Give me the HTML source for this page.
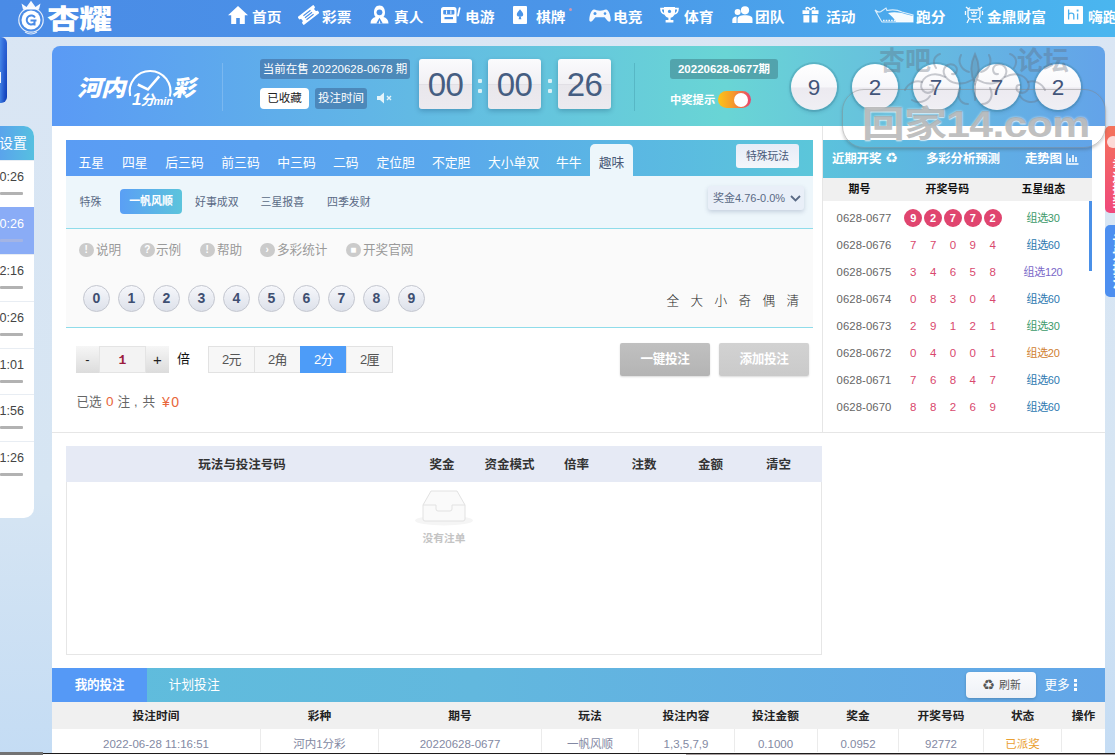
<!DOCTYPE html>
<html lang="zh-CN">
<head>
<meta charset="utf-8">
<title>河内1分彩</title>
<style>
*{box-sizing:border-box;margin:0;padding:0}
html,body{width:1115px;height:755px;overflow:hidden}
body{position:relative;background:linear-gradient(180deg,#dae6f4 0%,#d6e5f3 65%,#c4dcf4 100%);font-family:"Liberation Sans","Noto Sans CJK SC",sans-serif;font-size:12px;color:#333;line-height:1}
.abs{position:absolute}
/* NAV */
#nav{position:absolute;left:0;top:0;width:1115px;height:37px;background:linear-gradient(90deg,#4a8be6 0%,#4b95e8 50%,#4ab6ef 100%)}
#nav .it{position:absolute;top:8.6px;height:18px;line-height:18px;font-size:13.4px;font-weight:bold;color:#fff;white-space:nowrap;transform:scaleX(1.1);transform-origin:left;margin-left:-1.2px}
#nav svg{position:absolute}
#logo{position:absolute;left:46.5px;top:3.5px;font-size:27.5px;line-height:32px;font-weight:900;color:#fff;letter-spacing:-0.5px;transform:scaleX(1.19);transform-origin:left;white-space:nowrap}
/* SIDEBAR */
#sbbox{position:absolute;left:0;top:37px;width:6.7px;height:65.6px;border-radius:0 6px 6px 0;background:linear-gradient(90deg,rgba(80,150,240,.75) 0%,rgba(60,120,230,.35) 60%,rgba(0,0,0,0) 100%),linear-gradient(180deg,#2c62d4,#0c3ab4)}
#side{position:absolute;left:0;top:126px;width:34px;height:392px;background:#fff;border-radius:0 10px 10px 0;overflow:hidden}
#side .hd{position:absolute;left:0;top:0;width:34px;height:34px;background:linear-gradient(90deg,#5aa4ec,#56c0e0);color:#fff;font-size:14px;line-height:35px;white-space:nowrap}
#side .hd span{position:absolute;right:7px;top:0}
#side .r{position:absolute;left:0;width:34px;height:47px;border-top:1px solid #e8edf3;color:#444;font-size:12.6px}
#side .r span{position:absolute;right:10px;top:9px;line-height:14px;white-space:nowrap}
#side .r i{position:absolute;left:0;top:31px;width:23px;height:2.5px;background:#b2b2b2;border-radius:1px}
#side .r.on{background:#8aacf6;color:#fff;border-top-color:#8aacf6}
#side .r.on i{background:#a3b4e4}
/* HEADER PANEL */
#hp{position:absolute;left:52px;top:46px;width:1053px;height:80px;border-radius:8px 8px 0 0;background:linear-gradient(90deg,#5a9af5 0%,#69d5d5 64%,#63a3e9 100%)}
#main{position:absolute;left:52px;top:126px;width:1053px;height:629px;background:#fff}

/* header panel contents */
#hp .logo{position:absolute;left:24.5px;top:30px;font-size:22.5px;line-height:26px;transform:scaleX(1.1);transform-origin:left;font-weight:900;font-style:italic;color:#fff;white-space:nowrap;letter-spacing:-1px}
#hp .logo2{position:absolute;left:119.5px;top:30px;font-size:22.5px;line-height:26px;transform:scaleX(1.03);transform-origin:left;font-weight:900;font-style:italic;color:#fff}
#hp .min{position:absolute;left:80px;top:43.5px;font-size:14px;line-height:20px;font-weight:bold;font-style:italic;color:#fff;white-space:nowrap;letter-spacing:-1px}
#hp .vline{position:absolute;top:17px;width:1px;height:48px;background:rgba(255,255,255,.18)}
.badge{position:absolute;height:20px;line-height:20px;border-radius:3px;color:#fff;font-size:11.5px;text-align:center;white-space:nowrap}
.fbox{position:absolute;top:13px;width:53px;height:50px;border-radius:3px;background:linear-gradient(180deg,#fbfbfd 0%,#f1f0f4 49%,#d9d7de 50%,#e9e7ec 52%,#eceaef 100%);box-shadow:0 2px 5px rgba(0,40,80,.25);color:#465e82;font-size:33px;line-height:52px;text-align:center;letter-spacing:-0.5px}
.cdot{position:absolute;width:4px;height:4px;background:#d9f1f6;border-radius:1px}
.ball{position:absolute;top:17.7px;width:46px;height:46px;margin-left:-1px;border-radius:50%;background:linear-gradient(180deg,#ffffff 0%,#f7f7fa 50%,#eceaf0 52%,#f0eff4 100%);box-shadow:0 0 0 2px rgba(60,130,150,.26),0 2px 4px rgba(0,40,80,.2);color:#42557a;font-size:22.5px;line-height:48px;text-align:center}
/* game tabs */
#tabs{position:absolute;left:14px;top:14px;width:747px;height:36px;background:linear-gradient(90deg,#5a9cf4 0%,#5aa8ec 50%,#5bc6da 100%)}
#tabs .t{position:absolute;top:0;height:36px;line-height:46px;font-size:12.8px;color:#fff;white-space:nowrap}
#tabs .sel{position:absolute;left:524px;top:4px;width:43px;height:32px;border-radius:5px 5px 0 0;background:#edf6fb;color:#4a5a78;font-size:12.8px;line-height:38px;text-align:center}
#tabs .sp{position:absolute;left:670px;top:4px;width:63px;height:24px;border-radius:3px;background:linear-gradient(180deg,#e6ecf7,#f3f6fb);color:#4a5a78;font-size:10.8px;line-height:24px;text-align:center}
#sub{position:absolute;left:14px;top:50px;width:747px;height:53px;background:#edf6fb;border-bottom:1px solid #8fdcea}
#sub .s{position:absolute;top:19px;font-size:10.9px;line-height:14px;color:#5a6a85;white-space:nowrap}
#sub .on{position:absolute;left:54px;top:13px;width:62px;height:25px;border-radius:4px;background:linear-gradient(90deg,#5a9ff5,#5cc4dc);color:#fff;font-weight:bold;font-size:10.9px;line-height:25px;text-align:center}
#sub .selbox{position:absolute;left:642px;top:10px;width:96px;height:24px;border-radius:3px;background:#e9eff8;box-shadow:0 2px 4px rgba(80,100,140,.25);color:#5a6a85;font-size:11px;line-height:24px;padding-left:5px;white-space:nowrap}
#area{position:absolute;left:14px;top:103px;width:747px;height:99px;background:#fafafa;border-bottom:1px solid #8fdcea}
#area .h{position:absolute;top:14px;height:14px;line-height:14px;font-size:12.6px;color:#9a9a9a;white-space:nowrap}
#area .ic{position:absolute;top:13.5px;width:14.5px;height:14.5px;border-radius:50%;background:#cbcbcb;color:#fff;font-size:10px;font-weight:bold;line-height:14px;text-align:center}
#area .n{position:absolute;top:56px;width:27px;height:27px;border-radius:50%;border:1px solid #c3c6cf;background:linear-gradient(180deg,#f6f7fb,#dde1ea);color:#3f4f72;font-size:14px;font-weight:bold;line-height:25px;text-align:center}
#area .q{position:absolute;top:65px;font-size:12.6px;line-height:14px;color:#222;font-weight:300}

/* bet row */
.mb{position:absolute;top:220px;height:27px;font-size:13px;line-height:27px;text-align:center;color:#222}
.unit{position:absolute;top:220px;height:27px;width:47px;border:1px solid #e2e2e2;background:#f7f7f7;color:#555;font-size:13px;line-height:25px;text-align:center;letter-spacing:-0.5px}
.gbtn{position:absolute;top:217px;width:90px;height:33px;border-radius:2px;color:#fff;font-size:12.6px;font-weight:bold;line-height:33px;text-align:center;letter-spacing:-0.3px;box-shadow:0 1px 2px rgba(0,0,0,.15)}
/* right panel */
#rp{position:absolute;left:771px;top:14px;width:269px;height:292px;overflow:hidden}
#rp .hd{position:absolute;left:0;top:0;width:269px;height:38px;background:linear-gradient(90deg,#5bc2dc 0%,#5fb0e4 55%,#62a4e8 100%)}
#rp .hd b{position:absolute;top:11px;line-height:16px;font-size:12.5px;color:#fff;white-space:nowrap;letter-spacing:-0.2px}
#rp .sh{position:absolute;left:0;top:38px;width:269px;height:23px;background:#f0f0f0}
#rp .sh b{position:absolute;top:4px;line-height:14px;font-size:10.9px;color:#111;white-space:nowrap}
#rp .row{position:absolute;left:0;width:269px;height:27px;font-size:11px;line-height:27px}
#rp .row .is{position:absolute;left:13.5px;top:0;color:#666;font-size:11.3px;letter-spacing:.1px}
#rp .row .d{position:absolute;top:0;width:20px;text-align:center;color:#d9486e;font-size:11.5px}
#rp .row .c{position:absolute;top:4.5px;width:18px;height:18px;border-radius:50%;background:#e0456f;color:#fff;font-weight:bold;font-size:11px;line-height:18px;text-align:center}
#rp .row .z{position:absolute;left:175px;width:90px;text-align:center;top:0;font-size:11px;letter-spacing:-0.3px}
/* bet list */
#bl{position:absolute;left:14px;top:320px;width:756px;height:209px;border:1px solid #e6e6e6;border-top:none}
#bl .hd{position:absolute;left:-1px;top:0;width:756px;height:36px;background:#e6eaf5}
#bl .hd b{position:absolute;top:11px;width:100px;margin-left:-50px;text-align:center;font-size:12.5px;line-height:16px;color:#333;white-space:nowrap}
/* bottom */
#bb{position:absolute;left:0;top:542px;width:1053px;height:34px;background:linear-gradient(90deg,#5fbddc 0%,#62b8de 40%,#63a6e8 100%)}
#bb .my{position:absolute;left:0;top:0;width:95px;height:34px;background:#5599f6;color:#fff;font-weight:bold;font-size:12.6px;line-height:34px;text-align:center;letter-spacing:-0.2px}
#bt{position:absolute;left:0;top:576px;width:1053px;height:27px;background:#f0f0f0}
#bt b{position:absolute;top:6px;width:100px;margin-left:-50px;text-align:center;font-size:11.7px;line-height:15px;color:#222;white-space:nowrap}
#br{position:absolute;left:0;top:603px;width:1053px;height:23px;background:#fff}
#br span{position:absolute;top:8px;width:160px;margin-left:-80px;text-align:center;font-size:11.5px;line-height:14px;color:#8389a3;white-space:nowrap}
#br i{position:absolute;top:0;width:1px;height:23px;background:#ebebeb}
</style>
</head>
<body>
<div id="nav">

  <svg style="left:17px;top:0" width="30" height="36" viewBox="0 0 30 36"><g fill="none" stroke="#fff"><circle cx="14" cy="20" r="12.2" stroke-width="1.2" opacity=".85"/><circle cx="14" cy="20" r="9.5" fill="#fff" stroke="none"/><path d="M18 17.5 a4.5 4.5 0 1 0 -1 6 M13.5 20.5 H19.5 M17.5 20.5 V25.5" stroke="#4a8be6" stroke-width="2" /><path d="M6 9.5 L4.5 3.5 L9.5 7 L14 0.8 L18.5 7 L23.5 3.5 L22 9.5 Z" fill="#fff" stroke="none" opacity=".95"/><path d="M8 32 Q14 36 20 32" stroke-width="1.2" opacity=".8"/></g></svg>
  <svg style="left:228px;top:6px" width="20" height="18" viewBox="0 0 20 18"><path d="M10 0 L20 9.2 H16.8 V18 H11.8 V12 H8.2 V18 H3.2 V9.2 H0 Z" fill="#fff"/></svg>
  <svg style="left:298px;top:5px" width="21" height="20" viewBox="0 0 21 20"><g transform="rotate(-38 10.5 10)"><path d="M0.5 5 H20.5 V8 a2 2 0 0 0 0 4 V15 H0.5 V12 a2 2 0 0 0 0 -4 Z" fill="#fff"/><path d="M6 7.5 H15 M6 10 H15 M6 12.5 H15" stroke="#4a8fe7" stroke-width="1.1"/></g></svg>
  <svg style="left:370px;top:5px" width="19" height="19" viewBox="0 0 19 19"><path d="M9.5 0.5 C13.5 0.5 15 4 15 7.5 C15 9.5 14.3 11 13.4 12 C16.5 12.8 18.5 14.8 18.5 18.5 H0.5 C0.5 14.8 2.5 12.8 5.6 12 C4.7 11 4 9.5 4 7.5 C4 4 5.5 0.5 9.5 0.5 Z" fill="#fff"/><circle cx="9.5" cy="7.3" r="2.9" fill="#4a90e7"/><path d="M6.2 18.5 L9.5 12.8 L12.8 18.5 Z" fill="#4a90e7"/><path d="M8.6 18.5 L9.5 15 L10.4 18.5Z" fill="#fff"/></svg>
  <svg style="left:441px;top:7px" width="20" height="16" viewBox="0 0 20 16"><path d="M2.5 0 H13 a2.5 2.5 0 0 1 2.5 2.5 V16 H0 V2.5 A2.5 2.5 0 0 1 2.5 0 Z" fill="#fff"/><rect x="2.2" y="3" width="11.2" height="4.4" rx="1" fill="#4a92e8"/><path d="M5.6 3.4 V7 M9.9 3.4 V7" stroke="#fff" stroke-width="1"/><rect x="3.5" y="10" width="8.5" height="2.2" fill="#4a92e8"/><path d="M17 8.5 L18.6 1.2" stroke="#fff" stroke-width="1.8" stroke-linecap="round"/></svg>
  <svg style="left:513px;top:6px" width="14" height="18" viewBox="0 0 14 18"><rect x="0" y="0" width="14" height="18" rx="1" fill="#fff"/><path d="M7 3.2 C8.6 5.2 10.2 6.6 10.2 8.6 C10.2 10.2 8.8 11 7.6 10.2 L8.4 13.2 H5.6 L6.4 10.2 C5.2 11 3.8 10.2 3.8 8.6 C3.8 6.6 5.4 5.2 7 3.2 Z" fill="#4a94e8"/></svg>
  <div class="abs" style="left:569px;top:8px;width:3px;height:3px;border-radius:50%;background:rgba(240,150,160,.8)"></div>
  <svg style="left:589px;top:9px" width="22" height="13" viewBox="0 0 22 13"><path d="M5 0.5 C7 0.5 8 1.8 11 1.8 C14 1.8 15 0.5 17 0.5 C19.5 0.5 21.5 6 21.7 10.5 C21.8 13 19.5 13.2 18.3 11.6 L15.6 8.2 H6.4 L3.7 11.6 C2.5 13.2 0.2 13 0.3 10.5 C0.5 6 2.5 0.5 5 0.5 Z" fill="#fff" opacity=".95"/><circle cx="6" cy="4.6" r="1.5" fill="#4a96e8"/><circle cx="16" cy="4.6" r="1.3" fill="#4a96e8"/></svg>
  <svg style="left:660px;top:7px" width="19" height="16" viewBox="0 0 19 16"><path d="M4 0 H15 V5 C15 8.4 12.6 10.4 10.6 10.8 V13 H13.4 V15.6 H5.6 V13 H8.4 V10.8 C6.4 10.4 4 8.4 4 5 Z" fill="#fff"/><path d="M4 1.6 H1 C1 5 2.4 6.6 4.8 7 M15 1.6 H18 C18 5 16.6 6.6 14.2 7" fill="none" stroke="#fff" stroke-width="1.6"/><circle cx="9.5" cy="4.4" r="1.6" fill="#4a9ae9"/></svg>
  <svg style="left:732px;top:6px" width="21" height="17" viewBox="0 0 21 17"><circle cx="13" cy="4.3" r="4.1" fill="#fff"/><path d="M5.5 17 V13 C5.5 10.4 8 9.2 13 9.2 C18 9.2 20.5 10.4 20.5 13 V17 Z" fill="#fff"/><circle cx="5.6" cy="6" r="3" fill="#fff"/><path d="M0.3 17 V13.8 C0.3 11.6 2 10.6 4.6 10.4 V17 Z" fill="#fff"/></svg>
  <svg style="left:802px;top:6px" width="17" height="17" viewBox="0 0 17 17"><path d="M0.5 4.2 H7.3 V8 H0.5 Z M9.7 4.2 H16.5 V8 H9.7 Z M1.4 9.2 H7.3 V16.4 H1.4 Z M9.7 9.2 H15.6 V16.4 H9.7 Z" fill="#fff"/><path d="M8.5 4 C6 0 2.8 1.2 4.6 3.6 M8.5 4 C11 0 14.2 1.2 12.4 3.6" fill="none" stroke="#fff" stroke-width="1.5"/></svg>
  <svg style="left:874px;top:7px" width="40" height="16" viewBox="0 0 40 16"><path d="M1 3 C3 5 5 5.5 7 4.5 L12 1 L13 3.5 C18 2.5 24 3 28 5 L39 8 V15 H8 C6 12 5 10 1 3 Z" fill="none" stroke="#fff" stroke-width="1.1" opacity=".8"/><path d="M14 6 C20 4.5 27 5.5 31 7 L39 9 V15 H22 C20 11 17 8.5 14 6 Z" fill="#fff" opacity=".95"/><path d="M9 13.5 H21" stroke="#fff" stroke-width="1.6" stroke-dasharray="1.6 1.1" opacity=".9"/></svg>
  <svg style="left:964px;top:6px" width="20" height="18" viewBox="0 0 20 18"><g fill="none" stroke="#fff" stroke-width="1.3" opacity=".95"><path d="M2 1 C4 3 5 3 6 1.5 M18 1 C16 3 15 3 14 1.5"/><path d="M4 4 H16 V10 C16 12.5 13.5 13.5 10 13.5 C6.5 13.5 4 12.5 4 10 Z"/><path d="M7 6 C8 8 9 8 10 6 C11 8 12 8 13 6 M7.5 10 H12.5"/><path d="M5 13 L3 17 M15 13 L17 17 M10 13.5 V17"/><path d="M1.5 5 V9 M18.5 5 V9"/></g></svg>
  <svg style="left:1064px;top:6px" width="19" height="18" viewBox="0 0 19 18"><rect width="19" height="18" rx="1" fill="#fff"/><path d="M4.6 3.6 V13.6 M4.6 9.2 C4.6 6.4 9.8 6.4 9.8 9.2 V13.6 M13.6 7.4 V13.6" fill="none" stroke="#4ab0ee" stroke-width="1.3"/><rect x="12.7" y="3.6" width="1.8" height="1.9" fill="#4ab0ee"/></svg>
  <div id="logo">杏耀</div>
  <div class="it" style="left:253px">首页</div>
  <div class="it" style="left:323px">彩票</div>
  <div class="it" style="left:395px">真人</div>
  <div class="it" style="left:466px">电游</div>
  <div class="it" style="left:537px">棋牌</div>
  <div class="it" style="left:614px">电竞</div>
  <div class="it" style="left:685px">体育</div>
  <div class="it" style="left:756px">团队</div>
  <div class="it" style="left:827px">活动</div>
  <div class="it" style="left:917px">跑分</div>
  <div class="it" style="left:988px">金鼎财富</div>
  <div class="it" style="left:1089px">嗨跑</div>
</div>
<div id="sbbox"><div class="abs" style="left:0;top:35px;width:1.2px;height:11px;background:#f0f4fc"></div></div>
<div id="side">
  <div class="hd"><span>设置</span></div>
  <div class="r" style="top:34px"><span>00:26</span><i></i></div>
  <div class="r on" style="top:81px"><span>00:26</span><i></i></div>
  <div class="r" style="top:128px"><span>02:16</span><i></i></div>
  <div class="r" style="top:175px"><span>00:26</span><i></i></div>
  <div class="r" style="top:222px"><span>51:01</span><i></i></div>
  <div class="r" style="top:268px"><span>01:56</span><i></i></div>
  <div class="r" style="top:315px"><span>01:26</span><i></i></div>
</div>
<div id="hp">
  <div class="logo">河内</div>
  <svg class="abs" style="left:72px;top:18px" width="52" height="52" viewBox="0 0 52 52"><path d="M6.2 32 A20.4 20.4 0 1 1 45.8 32.5" fill="none" stroke="#fff" stroke-width="2.1"/><path d="M13.8 20.5 L23.9 25.5 L35.2 12.3" fill="none" stroke="#fff" stroke-width="2.6" stroke-linejoin="miter"/></svg>
  <div class="min"><span style="font-size:17px;letter-spacing:-1px;font-family:'Liberation Sans',sans-serif">1</span>分<span style="font-size:11px;letter-spacing:0">min</span></div>
  <div class="logo2">彩</div>
  <div class="vline" style="left:170px"></div>
  <div class="badge" style="left:208px;top:13px;width:150px;background:rgba(60,100,150,.55)">当前在售 20220628-0678 期</div>
  <div class="badge" style="left:208px;top:42px;width:49px;height:21px;line-height:21px;background:#fff;color:#222;border-radius:4px">已收藏</div>
  <div class="badge" style="left:263px;top:42px;width:52px;height:21px;line-height:21px;background:rgba(60,100,150,.55)">投注时间</div>
  <svg class="abs" style="left:324px;top:45px" width="18" height="14" viewBox="0 0 18 14"><path d="M1 5 H4 L8 1.5 V12.5 L4 9 H1 Z" fill="#e4f4fa"/><path d="M11 5 L15 9 M15 5 L11 9" stroke="#e4f4fa" stroke-width="1.4"/></svg>
  <div class="fbox" style="left:367px">00</div>
  <div class="cdot" style="left:426px;top:33px"></div><div class="cdot" style="left:426px;top:43px"></div>
  <div class="fbox" style="left:436px">00</div>
  <div class="cdot" style="left:496px;top:33px"></div><div class="cdot" style="left:496px;top:43px"></div>
  <div class="fbox" style="left:506px">26</div>
  <div class="vline" style="left:582px;background:rgba(40,120,140,.25)"></div>
  <div class="badge" style="left:618px;top:13px;width:108px;background:rgba(60,120,130,.5);font-weight:bold">20220628-0677期</div>
  <div class="abs" style="left:618px;top:47px;font-size:11.3px;line-height:14px;font-weight:bold;color:#fff;white-space:nowrap">中奖提示</div>
  <div class="abs" style="left:666px;top:45px;width:33px;height:17px;border-radius:9px;background:linear-gradient(90deg,#fcc419 0%,#f59a2a 45%,#e8436f 100%)"></div>
  <div class="abs" style="left:682px;top:46.5px;width:14px;height:14px;border-radius:50%;background:#fff"></div>
  <div class="ball" style="left:740px">9</div>
  <div class="ball" style="left:801px">2</div>
  <div class="ball" style="left:862px">7</div>
  <div class="ball" style="left:923px">7</div>
  <div class="ball" style="left:984px">2</div>
</div>
<div id="main">
  <div id="tabs"><div class="t" style="left:12.4px">五星</div><div class="t" style="left:56.0px">四星</div><div class="t" style="left:99.3px">后三码</div><div class="t" style="left:155.3px">前三码</div><div class="t" style="left:211.3px">中三码</div><div class="t" style="left:267.0px">二码</div><div class="t" style="left:310.5px">定位胆</div><div class="t" style="left:366.0px">不定胆</div><div class="t" style="left:422.0px">大小单双</div><div class="t" style="left:490.0px">牛牛</div><div class="sel">趣味</div><div class="sp">特殊玩法</div></div>
  <div id="sub">
    <div class="s" style="left:13.5px">特殊</div>
    <div class="on">一帆风顺</div>
    <div class="s" style="left:129px">好事成双</div>
    <div class="s" style="left:194.5px">三星报喜</div>
    <div class="s" style="left:261px">四季发财</div>
    <div class="selbox">奖金4.76-0.0%<svg class="abs" style="left:82px;top:9px" width="11" height="7" viewBox="0 0 11 7"><path d="M1 1 L5.5 5.5 L10 1" fill="none" stroke="#5a6a85" stroke-width="1.8"/></svg></div>
  </div>
  <div id="area">
    <div class="ic" style="left:13px">!</div><div class="h" style="left:30px">说明</div>
    <div class="ic" style="left:74px">?</div><div class="h" style="left:90px">示例</div>
    <div class="ic" style="left:134px">!</div><div class="h" style="left:151px">帮助</div>
    <div class="ic" style="left:194px">&#8250;</div><div class="h" style="left:211px">多彩统计</div>
    <div class="ic" style="left:280px">&#9632;</div><div class="h" style="left:297px">开奖官网</div>
    <div class="n" style="left:17px">0</div><div class="n" style="left:52px">1</div><div class="n" style="left:87px">2</div><div class="n" style="left:122px">3</div><div class="n" style="left:157px">4</div><div class="n" style="left:192px">5</div><div class="n" style="left:227px">6</div><div class="n" style="left:262px">7</div><div class="n" style="left:297px">8</div><div class="n" style="left:332px">9</div>
    <div class="q" style="left:600.5px">全</div><div class="q" style="left:624.5px">大</div><div class="q" style="left:648.5px">小</div><div class="q" style="left:672.5px">奇</div><div class="q" style="left:696.5px">偶</div><div class="q" style="left:720.5px">清</div>
  </div>
  <div class="abs" style="left:770px;top:0;width:1px;height:306px;background:#e6e6e6"></div>
  <div class="abs" style="left:0;top:306px;width:1053px;height:1px;background:#e6e6e6"></div>
  <div class="mb" style="left:24px;width:23px;background:linear-gradient(180deg,#f6f6f6,#dcdcdc)">-</div>
  <div class="mb" style="left:47px;width:47px;background:#f3f3f3;border:1px solid #e4e4e4;color:#9c1c3c;font-family:'Liberation Mono',monospace;font-weight:bold;font-size:13px">1</div>
  <div class="mb" style="left:94px;width:23px;background:linear-gradient(180deg,#f6f6f6,#dcdcdc);font-size:15px">+</div>
  <div class="abs" style="left:125px;top:225px;font-size:13px;line-height:16px;color:#111">倍</div>
  <div class="unit" style="left:156px">2元</div>
  <div class="unit" style="left:202px">2角</div>
  <div class="unit" style="left:248px;background:#4d9cf8;border-color:#4d9cf8;color:#fff">2分</div>
  <div class="unit" style="left:294px">2厘</div>
  <div class="gbtn" style="left:568px;background:linear-gradient(180deg,#c0c0c0,#b4b4b4)">一键投注</div>
  <div class="gbtn" style="left:667px;background:linear-gradient(180deg,#d2d2d2,#cacaca)">添加投注</div>
  <div class="abs" style="left:0;top:268px;font-size:12.6px;line-height:16px;color:#666;white-space:nowrap"><span class="abs" style="left:24.5px">已选</span><span class="abs" style="left:54px;color:#e8663a;font-size:13.5px">0</span><span class="abs" style="left:65.5px">注</span><span class="abs" style="left:82px">,</span><span class="abs" style="left:90.5px">共</span><span class="abs" style="left:110px;color:#e8663a;font-size:14px;letter-spacing:1.5px">¥0</span></div>
  <div id="rp">
    <div class="hd"><b style="left:9px">近期开奖</b><b style="left:103px">多彩分析预测</b><b style="left:202px">走势图</b>
      <span class="abs" style="left:62px;top:9px;font-family:'DejaVu Sans',sans-serif;font-size:14.5px;line-height:18px;color:#fff">♻</span>
      <svg class="abs" style="left:243px;top:12px" width="13" height="13" viewBox="0 0 13 13"><path d="M1 1 V12 H12.5" fill="none" stroke="#fff" stroke-width="1.4"/><path d="M4 10 V6 M7 10 V3 M10 10 V5" stroke="#fff" stroke-width="1.6"/></svg>
    </div>
    <div class="sh"><b style="left:25.5px">期号</b><b style="left:102.5px">开奖号码</b><b style="left:198.5px">五星组态</b></div>
    <div class="row" style="top:64.5px"><span class="is">0628-0677</span><span class="c" style="left:81.2px">9</span><span class="c" style="left:101.1px">2</span><span class="c" style="left:120.9px">7</span><span class="c" style="left:140.8px">7</span><span class="c" style="left:160.6px">2</span><span class="z" style="color:#3c9a6a">组选30</span></div><div class="row" style="top:91.5px"><span class="is">0628-0676</span><span class="d" style="left:80.2px">7</span><span class="d" style="left:100.1px">7</span><span class="d" style="left:119.9px">0</span><span class="d" style="left:139.8px">9</span><span class="d" style="left:159.6px">4</span><span class="z" style="color:#2b78b0">组选60</span></div><div class="row" style="top:118.5px"><span class="is">0628-0675</span><span class="d" style="left:80.2px">3</span><span class="d" style="left:100.1px">4</span><span class="d" style="left:119.9px">6</span><span class="d" style="left:139.8px">5</span><span class="d" style="left:159.6px">8</span><span class="z" style="color:#7a68c8">组选120</span></div><div class="row" style="top:145.5px"><span class="is">0628-0674</span><span class="d" style="left:80.2px">0</span><span class="d" style="left:100.1px">8</span><span class="d" style="left:119.9px">3</span><span class="d" style="left:139.8px">0</span><span class="d" style="left:159.6px">4</span><span class="z" style="color:#2b78b0">组选60</span></div><div class="row" style="top:172.5px"><span class="is">0628-0673</span><span class="d" style="left:80.2px">2</span><span class="d" style="left:100.1px">9</span><span class="d" style="left:119.9px">1</span><span class="d" style="left:139.8px">2</span><span class="d" style="left:159.6px">1</span><span class="z" style="color:#3c9a6a">组选30</span></div><div class="row" style="top:199.5px"><span class="is">0628-0672</span><span class="d" style="left:80.2px">0</span><span class="d" style="left:100.1px">4</span><span class="d" style="left:119.9px">0</span><span class="d" style="left:139.8px">0</span><span class="d" style="left:159.6px">1</span><span class="z" style="color:#d08030">组选20</span></div><div class="row" style="top:226.5px"><span class="is">0628-0671</span><span class="d" style="left:80.2px">7</span><span class="d" style="left:100.1px">6</span><span class="d" style="left:119.9px">8</span><span class="d" style="left:139.8px">4</span><span class="d" style="left:159.6px">7</span><span class="z" style="color:#2b78b0">组选60</span></div><div class="row" style="top:253.5px"><span class="is">0628-0670</span><span class="d" style="left:80.2px">8</span><span class="d" style="left:100.1px">8</span><span class="d" style="left:119.9px">2</span><span class="d" style="left:139.8px">6</span><span class="d" style="left:159.6px">9</span><span class="z" style="color:#2b78b0">组选60</span></div>
    <div class="abs" style="left:266px;top:61px;width:3px;height:70px;background:#4a90e8"></div>
  </div>
  <div id="bl">
    <div class="hd"><b style="left:176px">玩法与投注号码</b><b style="left:376px">奖金</b><b style="left:443.5px">资金模式</b><b style="left:510.5px">倍率</b><b style="left:578px">注数</b><b style="left:644.5px">金额</b><b style="left:712.5px">清空</b></div>
    <svg class="abs" style="left:347px;top:42px;overflow:visible" width="60" height="40" viewBox="-5 0 60 40"><ellipse cx="25" cy="32.5" rx="29" ry="5" fill="#f5f5f5"/><path d="M4 17 L12 3 H38 L46 17 V31 a2 2 0 0 1 -2 2 H6 a2 2 0 0 1 -2 -2 Z" fill="#fafafa" stroke="#e2e2e2" stroke-width="1"/><path d="M4 17 H17 V21 a2 2 0 0 0 2 2 H31 a2 2 0 0 0 2 -2 V17 H46" fill="none" stroke="#e2e2e2" stroke-width="1"/></svg>
    <div class="abs" style="left:327px;top:85px;width:100px;text-align:center;font-size:10.7px;line-height:14px;color:#c4c4c4;font-weight:bold">没有注单</div>
  </div>
  <div id="bb"><div class="my">我的投注</div>
    <div class="abs" style="left:116.5px;top:0;color:#fff;font-size:12.8px;line-height:34px;white-space:nowrap">计划投注</div>
    <div class="abs" style="left:914px;top:4px;width:70px;height:26px;border-radius:4px;background:linear-gradient(180deg,#fafbfd,#eef1f6);box-shadow:0 1px 3px rgba(0,0,0,.2)"></div>
    <span class="abs" style="left:930px;top:8px;font-family:'DejaVu Sans',sans-serif;font-size:14.5px;line-height:18px;color:#555">♻</span>
    <div class="abs" style="left:947px;top:4px;color:#555;font-size:10.9px;line-height:26px;white-space:nowrap">刷新</div>
    <div class="abs" style="left:992.5px;top:0;color:#fff;font-size:12.6px;line-height:34px;white-space:nowrap">更多</div>
    <div class="abs" style="left:1022px;top:11px;width:3px;height:3px;background:#fff;box-shadow:0 4.5px 0 #fff,0 9px 0 #fff"></div>
  </div>
  <div id="bt"><b style="left:104px">投注时间</b><b style="left:267.4px">彩种</b><b style="left:408px">期号</b><b style="left:538px">玩法</b><b style="left:634px">投注内容</b><b style="left:723.5px">投注金额</b><b style="left:806px">奖金</b><b style="left:889px">开奖号码</b><b style="left:970.6px">状态</b><b style="left:1031.4px">操作</b></div>
  <div id="br"><span style="left:104px">2022-06-28 11:16:51</span><span style="left:267.4px">河内1分彩</span><span style="left:408px">20220628-0677</span><span style="left:538px">一帆风顺</span><span style="left:634px">1,3,5,7,9</span><span style="left:723.5px">0.1000</span><span style="left:806px">0.0952</span><span style="left:889px">92772</span><span style="left:970.6px;color:#eaa030">已派奖</span>
    <i style="left:208px"></i><i style="left:326px"></i><i style="left:489px"></i><i style="left:586px"></i><i style="left:682px"></i><i style="left:765px"></i><i style="left:846px"></i><i style="left:931px"></i><i style="left:1009px"></i>
  </div>
</div>
<div class="abs" style="left:1105px;top:126px;width:10px;height:87px;border-radius:5px 0 0 5px;background:linear-gradient(180deg,#f4735a,#f0487c);overflow:hidden"><div class="abs" style="left:2px;top:10px;width:12px;height:12px;border-radius:50%;background:rgba(255,255,255,.75)"></div><div class="abs" style="left:7.5px;top:33px;width:14px;color:#fff;font-size:12px;font-weight:bold;line-height:12.5px">幸运抽奖</div></div>
<div class="abs" style="left:1105px;top:225px;width:10px;height:72px;border-radius:5px 0 0 5px;background:#4d8ff0;overflow:hidden"><div class="abs" style="left:7.5px;top:9px;width:14px;color:#fff;font-size:13px;font-weight:bold;line-height:14px">计划投注</div></div>
<div id="wm" class="abs" style="left:0;top:0;width:1115px;height:160px;pointer-events:none">
  <div class="abs" style="left:879px;top:46px;font-size:26px;line-height:30px;font-weight:bold;color:rgba(95,105,120,.36);white-space:nowrap">杏吧</div>
  <div class="abs" style="left:1017px;top:46px;font-size:26px;line-height:30px;font-weight:bold;color:rgba(95,105,120,.36);white-space:nowrap">论坛</div>
  <svg class="abs" style="left:900px;top:50px" width="150" height="62" viewBox="0 0 150 62"><g fill="none" stroke="rgba(105,112,125,.36)" stroke-width="2" stroke-linecap="round"><path d="M75 4 C70 14 70 24 75 34 C80 24 80 14 75 4 Z" fill="rgba(105,112,125,.22)"/><path d="M72 30 C62 36 50 34 45 26 C41 19 47 12 54 15 C59 18 57 25 52 24"/><path d="M78 30 C88 36 100 34 105 26 C109 19 103 12 96 15 C91 18 93 25 98 24"/><path d="M69 22 C62 20 57 13 61 5 M81 22 C88 20 93 13 89 5"/><path d="M45 27 C36 22 26 24 22 32 C19 39 25 45 31 42 C35 40 34 34 30 35"/><path d="M105 27 C114 22 124 24 128 32 C131 39 125 45 119 42 C115 40 116 34 120 35"/><path d="M22 32 C16 30 8 33 5 40 M128 32 C134 30 142 33 145 40"/><path d="M36 18 C32 12 34 6 40 4 M114 18 C118 12 116 6 110 4"/><path d="M60 38 C56 46 60 54 68 54 M90 38 C94 46 90 54 82 54"/><path d="M30 46 C26 52 18 54 12 50 M120 46 C124 52 132 54 138 50"/><path d="M75 34 V50"/></g></svg>
  <div class="abs" style="left:842px;top:89px;width:264px;height:59px;border-radius:22px;border:1.5px solid rgba(130,130,130,.45);box-shadow:0 2px 3px rgba(60,60,60,.25)"></div>
  <div class="abs" style="left:862px;top:102.5px;font-size:36px;line-height:44px;font-weight:bold;color:rgba(150,150,150,.6);white-space:nowrap;letter-spacing:-0.6px;transform:scaleX(1.19);transform-origin:left;text-shadow:0 0 2px rgba(255,255,255,.7),0 1px 1px rgba(255,255,255,.6)">回家14.com</div>
</div>
<div class="abs" style="left:0;top:752.4px;width:43px;height:3px;background:#737373"></div>
<div class="abs" style="left:43px;top:753.8px;width:643px;height:2px;background:#fbfbfb"></div>
<div class="abs" style="left:686px;top:753.8px;width:429px;height:2px;background:#a69e9e"></div>
<div class="abs" style="left:43px;top:752.5px;width:1072px;height:1.4px;background:#1c1a1a"></div>
</body>
</html>
